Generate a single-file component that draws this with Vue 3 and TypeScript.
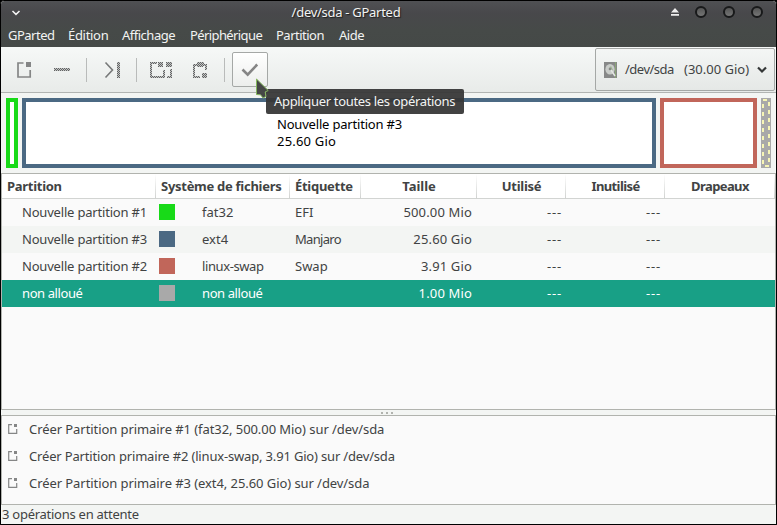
<script setup lang="ts">
interface Partition {
  name: string
  color: string
  fs: string
  label: string
  size: string
  selected?: boolean
}

const menus: string[] = ['GParted', 'Édition', 'Affichage', 'Périphérique', 'Partition', 'Aide']

const columns: string[] = ['Partition', 'Système de fichiers', 'Étiquette', 'Taille', 'Utilisé', 'Inutilisé', 'Drapeaux']

const partitions: Partition[] = [
  { name: 'Nouvelle partition #1', color: 'green', fs: 'fat32', label: 'EFI', size: '500.00 Mio' },
  { name: 'Nouvelle partition #3', color: 'blue', fs: 'ext4', label: 'Manjaro', size: '25.60 Gio' },
  { name: 'Nouvelle partition #2', color: 'red', fs: 'linux-swap', label: 'Swap', size: '3.91 Gio' },
  { name: 'non alloué', color: 'gray', fs: 'non alloué', label: '', size: '1.00 Mio', selected: true },
]

const operations: string[] = [
  'Créer Partition primaire #1 (fat32, 500.00 Mio) sur /dev/sda',
  'Créer Partition primaire #2 (linux-swap, 3.91 Gio) sur /dev/sda',
  'Créer Partition primaire #3 (ext4, 25.60 Gio) sur /dev/sda',
]

const dashes: number[] = [0, 1, 2, 3, 4, 5, 6, 7]
</script>

<template>
  <div class="window">
    <header class="top">
      <div class="titlebar">
        <svg class="win-menu" width="10" height="6" viewBox="0 0 10 6"><path d="M1.500 1l3.500 3.400L8.500 1" fill="none" stroke="#f4f4f4" stroke-width="1.500" /></svg>
        <span class="title">/dev/sda - GParted</span>
        <div class="controls">
          <svg width="8" height="8" viewBox="0 0 8 8"><path d="M4 0l4 4.500H0zM0 6h8v1.700H0z" fill="#eee" /></svg>
          <i class="knob"></i><i class="knob"></i><i class="knob"></i>
        </div>
      </div>
      <nav class="menubar">
        <span v-for="m in menus" :key="m">{{ m }}</span>
      </nav>
    </header>

    <div class="toolbar">
      <svg class="tools" width="230" height="45" viewBox="0 0 230 45">
        <defs>
          <pattern id="stipple" width="2" height="2" patternUnits="userSpaceOnUse">
            <rect width="2" height="2" fill="#c3c4c4" />
            <rect width="1" height="1" fill="#626464" />
            <rect x="1" y="1" width="1" height="1" fill="#626464" />
          </pattern>
        </defs>
        <path d="M22.500 16h-5.500v14h12.200v-7" fill="none" stroke="#858686" stroke-width="1.700" />
        <path d="M25 15h5v5h-5z" fill="#858686" />
        <path d="M53 21h16v3H53z" fill="url(#stipple)" />
        <path d="M85.500 11v24M135.500 11v24M223.500 11v24" stroke="#b9bbba" />
        <path d="M104.500 15.500l7 7.500l-7 7.500" fill="none" stroke="#777979" stroke-width="1.600" />
        <path d="M116 15h3v16h-3z" fill="url(#stipple)" />
        <path d="M149 15h7v2h-5v12h11v-6h2v8h-15zM157 15h5v5h-5zM165 15h6v5h-6zM169 22h2v9h-5v-2h3z" fill="url(#stipple)" />
        <path d="M192 17h4v-2h7v2h3v6h-2v-4h-2v1h-6v-1h-2v10h5v2h-7zM201 26h5v5h-5z" fill="url(#stipple)" />
      </svg>
      <div class="apply">
        <svg width="18" height="16" viewBox="0 0 18 16"><path d="M1.500 7.500l5.200 5.200L16.200 2.500" fill="none" stroke="#858585" stroke-width="2.600" /></svg>
      </div>
      <div class="device">
        <svg class="disk" width="14" height="16" viewBox="0 0 14 16">
          <path d="M0 0h13v16H0z" fill="#878888" />
          <path d="M11 0h1v16h-1z" fill="#8aa578" />
          <ellipse cx="6" cy="7.200" rx="4.600" ry="5.200" fill="#c9ccc9" />
          <path d="M5 6l2-2l2 4l-2 1z" fill="#9eb494" />
          <circle cx="6" cy="7" r="1.300" fill="#888" />
          <path d="M7 8l4 6" stroke="#e4e6e4" stroke-width="1.500" />
        </svg>
        <span class="dev-name">/dev/sda</span>
        <span class="dev-size">(30.00 Gio)</span>
        <svg class="drop" width="10" height="8" viewBox="0 0 10 8"><path d="M1 1.500l4 4l4-4" fill="none" stroke="#343737" stroke-width="2.200" /></svg>
      </div>
    </div>

    <section class="visual">
      <div class="part p1"></div>
      <div class="part p3"><span>Nouvelle partition #3</span><span class="amount">25.60 Gio</span></div>
      <div class="part p2"></div>
      <svg width="10" height="70" viewBox="0 0 10 70">
        <path d="M0 0h10v70H0z" fill="#a9a9a9" />
        <g fill="#f7f6b5">
          <rect x="2" y="1" width="4" height="2" />
          <rect x="4" y="67" width="4" height="2" />
          <rect v-for="n in dashes" :key="'l' + n" x="1" :y="6 + n * 8" width="2" height="4" />
          <rect v-for="n in dashes" :key="'r' + n" x="7" :y="4 + n * 8" width="2" height="4" />
        </g>
      </svg>
    </section>

    <section class="tree">
      <div class="row head">
        <span v-for="(c, i) in columns" :key="c" :class="['c' + i]">{{ c }}</span>
      </div>
      <div v-for="p in partitions" :key="p.name" class="row" :class="{ selected: p.selected }">
        <span class="name">{{ p.name }}</span>
        <span class="fs"><i class="swatch" :class="p.color"></i><span class="fs-name">{{ p.fs }}</span></span>
        <span class="label">{{ p.label }}</span>
        <span class="num">{{ p.size }}</span>
        <span class="num dash">---</span>
        <span class="num dash">---</span>
        <span></span>
      </div>
    </section>

    <div class="handle"><i></i><i></i><i></i></div>

    <section class="operations">
      <div v-for="o in operations" :key="o" class="op">
        <svg width="10" height="10" viewBox="0 0 10 10">
          <path d="M4 .7H.7v8.600h8V5" fill="none" stroke="#858686" stroke-width="1.200" />
          <path d="M6 0h3v3H6z" fill="#858686" />
        </svg>
        <span>{{ o }}</span>
      </div>
    </section>

    <footer class="status">3 opérations en attente</footer>

    <div class="tooltip">Appliquer toutes les opérations</div>
    <svg class="cursor" width="15" height="23" viewBox="0 0 15 23">
      <path d="M1.500 2v15.500l4 .3l2.500 3.200l3-1.500l-.8-4.500l3-1.500z" fill="#454746" stroke="#84b65d" />
    </svg>
  </div>
</template>

<style>
body {
  margin: 0;
  background: #000;
}
</style>

<style scoped>
.window {
  box-sizing: border-box;
  position: relative;
  width: 777px;
  height: 525px;
  border: 1px solid #000;
  border-radius: 4px 4px 0 0;
  background: #f3f5f3;
  display: flex;
  flex-direction: column;
  overflow: hidden;
  font-family: "Noto Sans", "Open Sans", sans-serif;
  font-size: 13px;
  line-height: 18px;
  color: #414343;
  white-space: pre;
}
.top {
  height: 46px;
  background: linear-gradient(#505154, #48484b 12px, #464a48 30px, #454947);
  color: #f2f3f2;
  border-radius: 3px 3px 0 0;
}
.titlebar {
  height: 23px;
  display: grid;
  grid-template-columns: 120px 1fr 120px;
  align-items: center;
}
.win-menu {
  margin-left: 10px;
}
.title {
  text-align: center;
  padding: 0 85px 2px 0;
  letter-spacing: -0.28px;
  text-shadow: 1px 1px 1px #1c1c1d;
}
.controls {
  display: flex;
  align-items: center;
  justify-content: flex-end;
  gap: 16px;
  padding: 0 13px 1px 0;
}
.knob {
  box-sizing: border-box;
  width: 12px;
  height: 12px;
  border: 2px solid #18191a;
  border-radius: 50%;
  background: linear-gradient(#555, #747575);
}
.menubar {
  height: 21px;
  display: grid;
  grid-template-columns: 60px 54px 68px 86px 63px 40px;
  align-items: center;
  padding-left: 7px;
  letter-spacing: -0.5px;
}
.menubar span:nth-child(2) {
  letter-spacing: -0.3px;
}
.menubar span:nth-child(4) {
  letter-spacing: -0.6px;
}
.toolbar {
  box-sizing: border-box;
  height: 46px;
  flex: none;
  display: flex;
  background: linear-gradient(#f6f8f7, #e8ebe9);
  border-bottom: 1px solid #b1b4b2;
}
.tools {
  flex: none;
}
.apply {
  box-sizing: border-box;
  width: 36px;
  height: 35px;
  margin: 5px 0 0 1px;
  border: 1px solid #a5a8a6;
  border-radius: 2px;
  display: flex;
  align-items: center;
  justify-content: center;
  background: linear-gradient(#fff, #eceeec);
}
.device {
  box-sizing: border-box;
  width: 180px;
  height: 43px;
  margin: 1px 1px 0 auto;
  border: 1px solid #a5a8a6;
  border-radius: 2px;
  display: flex;
  align-items: center;
  padding-left: 8px;
  background: linear-gradient(#f4f6f5, #e5e8e6);
}
.dev-name {
  width: 59px;
  margin: 0 0 1px 7px;
  letter-spacing: -0.5px;
}
.dev-size {
  width: 67px;
  margin-bottom: 1px;
}
.drop {
  margin-left: 6px;
}
.visual {
  height: 80px;
  flex: none;
  box-sizing: border-box;
  padding: 5px 5px 0;
  display: flex;
  gap: 4px;
}
.part {
  box-sizing: border-box;
  height: 70px;
  border: 4px solid;
  background: #fff;
}
.p1 {
  width: 12px;
  border-color: #18da18;
}
.p3 {
  width: 634px;
  border-color: #4b6983;
  display: flex;
  flex-direction: column;
  padding: 14px 0 0 251px;
  line-height: 17px;
  letter-spacing: -0.19px;
}
.p3 span {
  color: #000;
}
.p3 .amount {
  letter-spacing: 0.2px;
}
.p2 {
  width: 97px;
  border-color: #c1665a;
}
.tree {
  box-sizing: border-box;
  height: 237px;
  flex: none;
  border: 1px solid #b1b3ae;
  background: #fafafa;
}
.row {
  height: 27px;
  display: grid;
  grid-template-columns: 154px 134px 71px 116px 89px 99px 1fr;
  align-items: center;
}
.row:nth-child(odd) {
  background: #f3f5f3;
}
.row.selected {
  background: #18a086;
  color: #fff;
}
.row.head {
  box-sizing: border-box;
  height: 25px;
  align-items: stretch;
  background: #fff;
  border-bottom: 1px solid #d2d4d2;
  font-weight: 700;
  letter-spacing: -0.28px;
}
.head span {
  text-align: center;
  line-height: 25px;
  background: linear-gradient(#fff, #cfd1cf) right / 1px 100% no-repeat;
}
.head .c0 {
  text-align: left;
  padding-left: 5px;
}
.head .c1,
.head .c2 {
  text-align: left;
  padding-left: 5px;
}
.head .c3 {
  letter-spacing: 0;
}
.head .c5,
.head .c6 {
  letter-spacing: -0.6px;
}
.name {
  padding: 0 0 2px 20px;
  letter-spacing: -0.19px;
}
.selected .name {
  letter-spacing: -0.4px;
}
.fs {
  display: flex;
  align-items: center;
  padding-left: 3px;
}
.fs-name {
  padding-bottom: 2px;
}
.row:nth-child(n + 4) .fs-name {
  letter-spacing: -0.4px;
}
.swatch {
  width: 16px;
  height: 16px;
  margin: 0 27px 1px 0;
}
.green {
  background: #18da18;
}
.blue {
  background: #4b6983;
}
.red {
  background: #c1665a;
}
.gray {
  background: #a9a9a9;
}
.label {
  padding: 0 0 2px 5px;
}
.row:nth-child(3) .label {
  letter-spacing: -0.7px;
}
.num {
  text-align: right;
  padding: 0 5px 2px 0;
  letter-spacing: 0.15px;
}
.dash {
  letter-spacing: 0.8px;
  padding-right: 4px;
}
.handle {
  height: 5px;
  flex: none;
  display: flex;
  align-items: center;
  justify-content: center;
  gap: 3px;
  padding-right: 3px;
}
.handle i {
  width: 2px;
  height: 2px;
  background: #b1b3ae;
}
.operations {
  box-sizing: border-box;
  height: 90px;
  flex: none;
  border: 1px solid #b1b3ae;
  background: #fafafa;
}
.op {
  height: 27px;
  display: flex;
  align-items: center;
  gap: 11px;
  padding-left: 6px;
}
.op svg {
  margin-bottom: 1px;
}
.op span {
  padding-bottom: 2px;
  letter-spacing: -0.07px;
}
.op:nth-child(2) span {
  letter-spacing: -0.17px;
}
.status {
  padding-left: 1px;
  letter-spacing: -0.26px;
}
.tooltip {
  position: absolute;
  left: 265px;
  top: 88px;
  box-sizing: border-box;
  width: 198px;
  height: 25px;
  padding: 3px 8px;
  border-radius: 2px;
  background: rgba(54, 54, 54, 0.94);
  color: #f3f4f3;
  letter-spacing: -0.33px;
}
.cursor {
  position: absolute;
  left: 254px;
  top: 76px;
}
</style>
